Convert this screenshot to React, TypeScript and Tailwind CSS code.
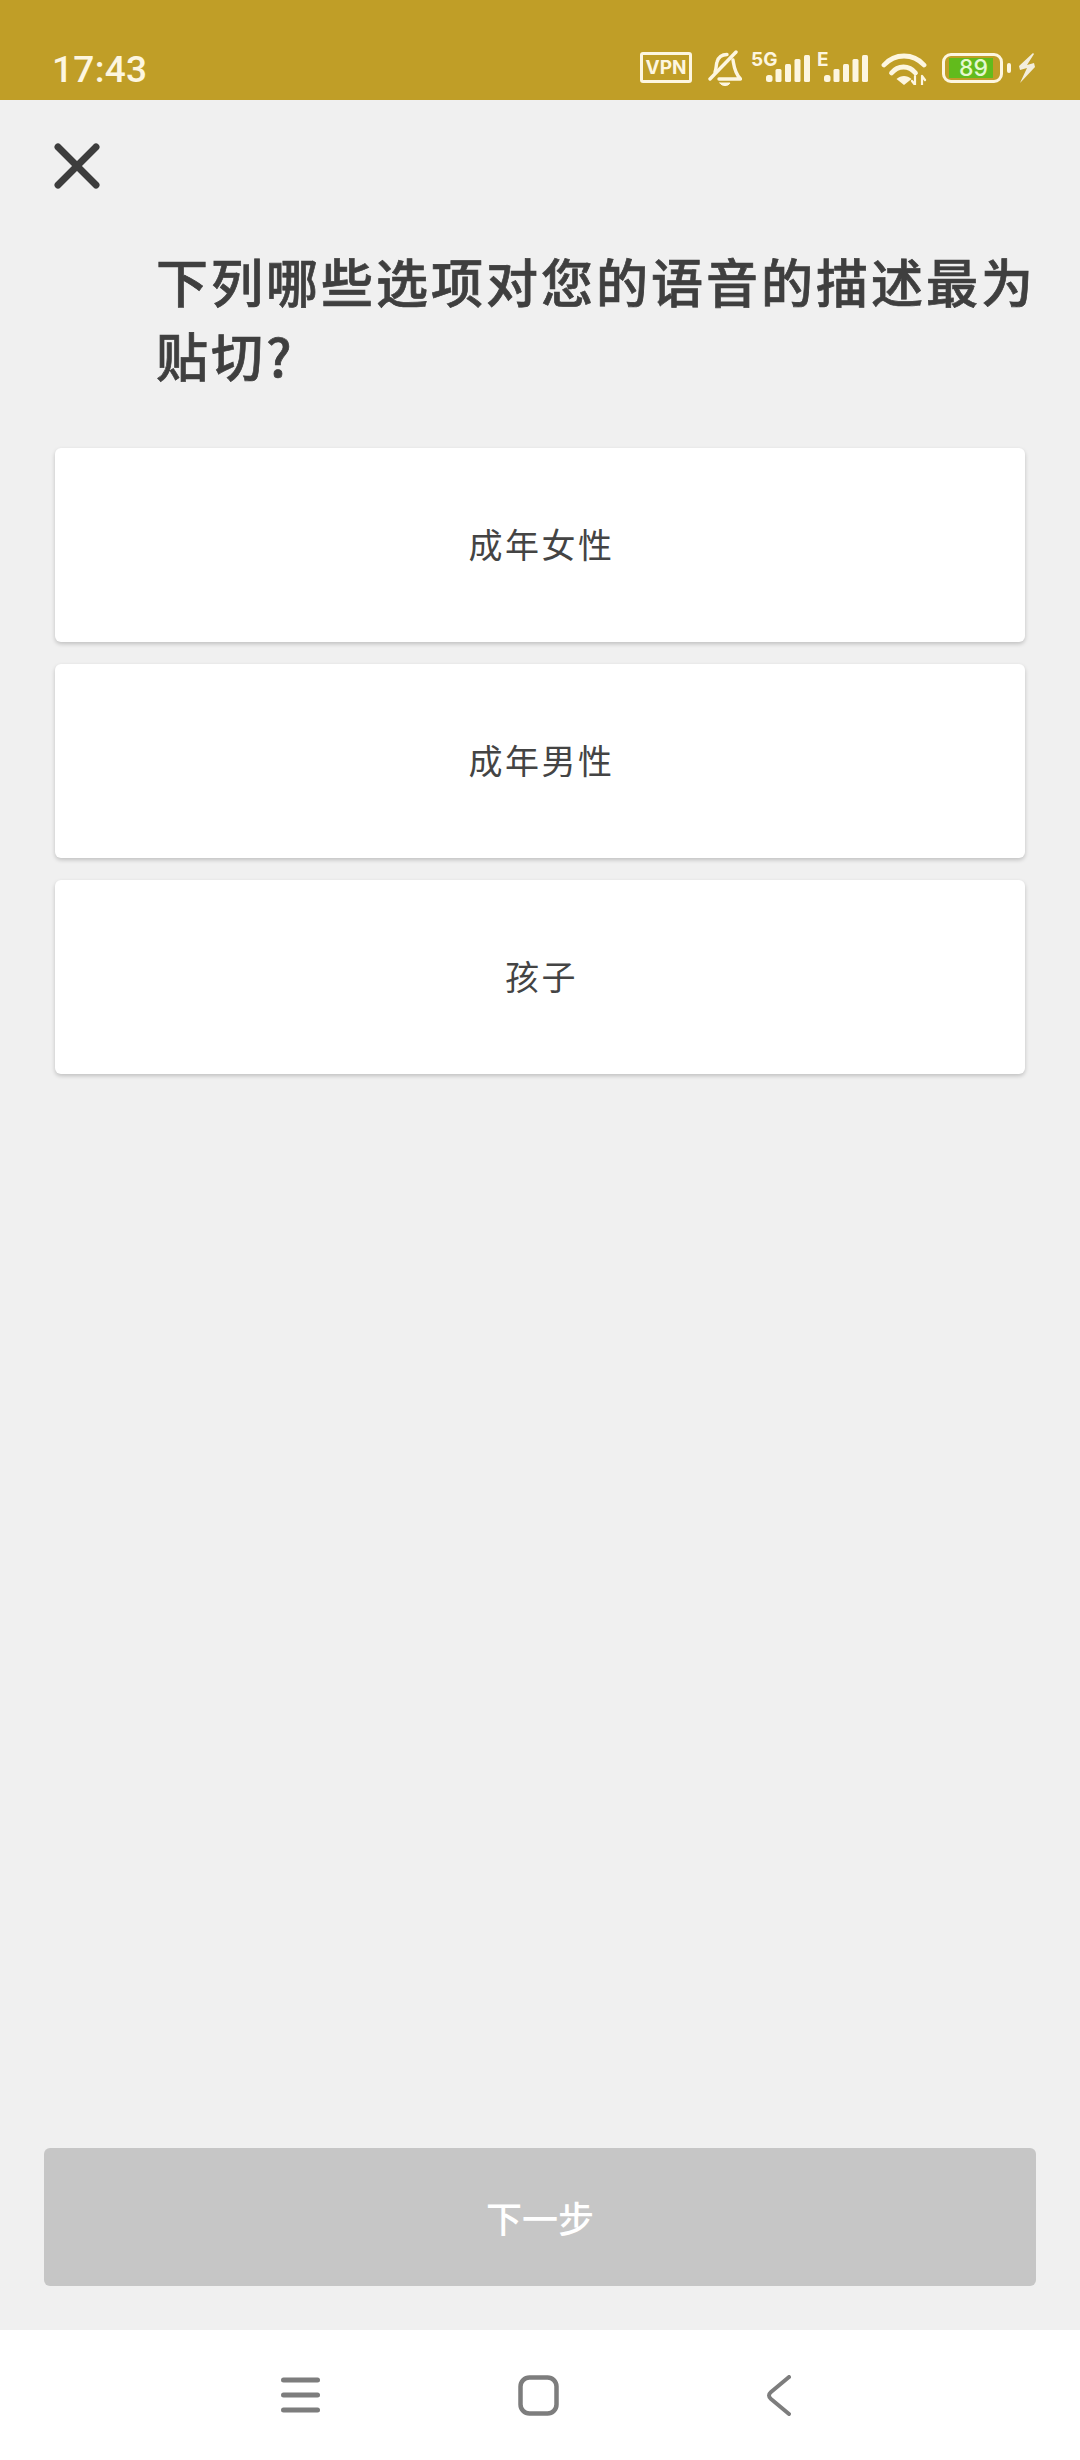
import { X } from "lucide-react";

const cjk = { fontFamily: '"Noto Sans CJK SC", "Noto Sans", sans-serif' };

function Signal({ label, labelClass }: { label: string; labelClass: string }) {
  return (
    <div className="relative mt-[5px] h-[27px] w-[44px]">
      <span className={`absolute top-[-5px] text-[19px] font-bold leading-[19px] ${labelClass}`}>{label}</span>
      <svg width="44" height="27" viewBox="0 0 44 27" className="absolute left-0 top-0" fill="#fdf6e0">
        <rect x="0" y="20" width="6.500" height="7" rx="2.500" />
        <rect x="9.500" y="14" width="6" height="13" rx="1.500" />
        <rect x="19" y="9" width="6" height="18" rx="1.500" />
        <rect x="28.500" y="4" width="6" height="23" rx="1.500" />
        <rect x="38" y="0" width="6" height="27" rx="1.500" />
      </svg>
    </div>
  );
}

function StatusBar() {
  return (
    <div className="flex h-[100px] items-start justify-between bg-[#c09e27] pl-[52px] pr-[44px] pt-[50px] text-[#fdf6e0]">
      <span className="text-[37px] font-medium leading-[40px] tracking-[0.3px]" style={{ fontFamily: "Roboto, sans-serif" }}>
        17:43
      </span>
      <div className="flex items-start" style={{ fontFamily: "Inter, sans-serif" }}>
        <div className="mt-[2px] flex h-[31px] w-[52px] items-center justify-center rounded-[3px] border-[3px] border-[#fdf6e0] text-[19px] font-bold leading-none">
          VPN
        </div>
        <svg width="34" height="37" viewBox="0 0 34 37" fill="none" stroke="#fdf6e0" strokeWidth="3.400" strokeLinecap="round" strokeLinejoin="round" className="ml-[16px]">
          <path d="M7 22C8.500 18 8 15 9 12 10.500 7 14 4.500 19 4.500" />
          <path d="M25 10C26 15 26 22 32.500 29H11" />
          <path d="M2 29 28 2" />
          <path d="M12 33h10c-2 3.500-8 3.500-10 0z" fill="#fdf6e0" strokeWidth="1" />
        </svg>
        <div className="w-[24px]" />
        <Signal label="5G" labelClass="left-[-15px]" />
        <div className="w-[14px]" />
        <Signal label="E" labelClass="left-[-7px]" />
        <svg width="46" height="32" viewBox="0 0 46 32" fill="none" stroke="#fdf6e0" strokeWidth="4.800" strokeLinecap="round" className="ml-[13px] mt-[3px]">
          <path d="M3 12C14 0 32 0 43 12" />
          <path d="M10.500 20C17 12 28 12 34.500 20" />
          <path d="M15.500 26C20 22 26 22 30.500 26L23 32z" fill="#fdf6e0" stroke="none" />
          <path d="M34 23v9M34 32l-3-4M41 32v-9M41 23l3 4" strokeWidth="2.200" />
        </svg>
        <div className="ml-[15px] mt-[3px] flex items-center">
          <div className="flex h-[30px] w-[61px] items-center rounded-[9px] border-[3px] border-[#fdf6e0] pl-[4px]">
            <div className="flex h-[20px] w-[44px] items-center justify-center bg-[#62bb1c] pl-[5px] text-[23px] font-medium leading-none text-[#e4f8cf]">
              89
            </div>
          </div>
          <div className="ml-[4px] h-[10px] w-[4px] rounded-[2px] bg-[#fdf6e0]" />
        </div>
        <svg width="18" height="30" viewBox="0 0 18 30" fill="#f3eedd" className="ml-[7px] mt-[3px]">
          <path d="M15 0 1 13l1 4 7-2-7 15 15-16-1-4-7 2 7-11z" />
        </svg>
      </div>
    </div>
  );
}

function Option({ label }: { label: string }) {
  return (
    <button className="flex h-[194px] w-full items-center justify-center rounded-[6px] bg-white pb-[3px] pl-[3px] text-[34px] tracking-[2.500px] text-[#444444] shadow-[0_2px_4px_rgba(0,0,0,0.2)]">
      {label}
    </button>
  );
}

function NavBar() {
  return (
    <div className="flex h-[130px] items-center bg-white pl-[281px]">
      <svg width="39" height="38" viewBox="0 0 39 38" fill="#7d7d7d">
        <rect x="0" y="1.500" width="39" height="5" rx="2.500" />
        <rect x="0" y="16.500" width="39" height="5" rx="2.500" />
        <rect x="0" y="31.500" width="39" height="5" rx="2.500" />
      </svg>
      <svg width="41" height="41" viewBox="0 0 41 41" fill="none" stroke="#7d7d7d" strokeWidth="4.500" className="ml-[198px]">
        <rect x="2.500" y="2.500" width="36" height="36" rx="9" />
      </svg>
      <svg width="25" height="41" viewBox="0 0 25 41" fill="none" stroke="#7d7d7d" strokeWidth="4" strokeLinecap="round" strokeLinejoin="round" className="ml-[207px]">
        <path d="M23 2 5 17Q1 20.500 5 24L23 39" />
      </svg>
    </div>
  );
}

export default function App() {
  return (
    <div className="flex h-[2460px] w-[1080px] flex-col bg-[#f0f0f0]" style={cjk}>
      <StatusBar />
      <div className="flex flex-1 flex-col">
        <div className="pl-[39px] pt-[28px]">
          <X size={76} strokeWidth={2.200} color="#3d3d3d" />
        </div>
        <h1 className="mt-[40px] pl-[156px] pr-[20px] text-[52px] font-medium leading-[74px] tracking-[3px] text-[#3f3f3f] [-webkit-text-stroke:0.7px_#3f3f3f]">
          下列哪些选项对您的语音的描述最为贴切?
        </h1>
        <div className="mt-[56px] flex flex-col gap-[22px] px-[55px]">
          <Option label="成年女性" />
          <Option label="成年男性" />
          <Option label="孩子" />
        </div>
        <div className="mt-auto px-[44px] pb-[44px]">
          <button className="flex h-[138px] w-full items-center justify-center rounded-[6px] bg-[#c6c6c6] text-[36px] font-medium text-white">
            下一步
          </button>
        </div>
      </div>
      <NavBar />
    </div>
  );
}
